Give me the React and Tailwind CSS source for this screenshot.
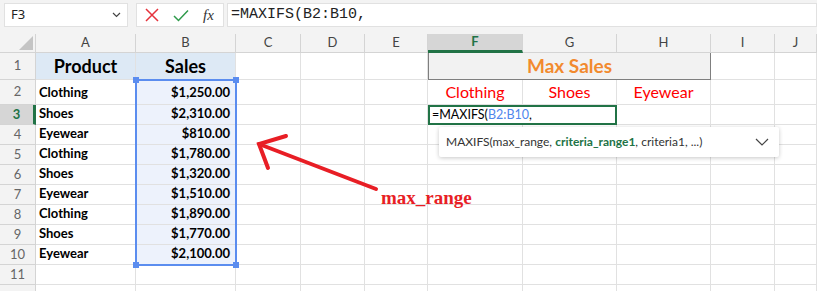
import React from 'react';

const cols = ['A', 'B', 'C', 'D', 'E', 'F', 'G', 'H', 'I', 'J'];

const rows = [
  ['Clothing', '$1,250.00'],
  ['Shoes', '$2,310.00'],
  ['Eyewear', '$810.00'],
  ['Clothing', '$1,780.00'],
  ['Shoes', '$1,320.00'],
  ['Eyewear', '$1,510.00'],
  ['Clothing', '$1,890.00'],
  ['Shoes', '$1,770.00'],
  ['Eyewear', '$2,100.00'],
];

const cell = 'border-r border-b border-[#e1e1e1] bg-white';
const rowHead = 'flex items-center justify-center border-r border-b border-[#d4d4d4] bg-[#f3f3f3] text-[13px] text-[#666]';
const ui = { fontFamily: '"Noto Sans", "Open Sans", sans-serif' };

const Blank = ({ n }) =>
  Array.from({ length: n }).map((_, i) => <div key={i} className={cell} />);

export default function App() {
  return (
    <div className="relative w-[817px] h-[291px] overflow-hidden bg-[#f3f3f3]" style={{ fontFamily: 'Lato, "Liberation Sans", sans-serif' }}>
      {/* formula bar */}
      <div className="flex h-[34px] pt-[3px] pl-[4px]" style={ui}>
        <div className="flex items-center justify-between w-[124px] h-[24px] bg-white border border-[#e1e1e1] px-[6px] text-[13px] text-[#222]">
          <span>F3</span>
          <svg width="9" height="6" viewBox="0 0 9 6"><path d="M1 1l3.5 3.5L8 1" fill="none" stroke="#444" strokeWidth="1.2" /></svg>
        </div>
        <div className="flex items-center ml-[8px] w-[88px] h-[24px] bg-white border border-[#e1e1e1]">
          <svg className="ml-[8px]" width="14" height="14" viewBox="0 0 14 14"><path d="M1 1l12 12M13 1L1 13" stroke="#e5323c" strokeWidth="1.5" /></svg>
          <svg className="ml-[14px]" width="16" height="13" viewBox="0 0 16 13"><path d="M1 7l4.5 4.5L15 1.5" fill="none" stroke="#2f9a4b" strokeWidth="1.5" /></svg>
          <span className="ml-[14px] text-[15px] italic text-[#333]" style={{ fontFamily: '"Liberation Serif", serif' }}>fx</span>
        </div>
        <div className="flex items-center flex-1 ml-[3px] h-[24px] bg-white border border-[#e1e1e1] pl-[3px] text-[15px] text-[#222]" style={{ fontFamily: '"Liberation Mono", monospace' }}>
          =MAXIFS(B2:B10,
        </div>
      </div>

      {/* sheet grid */}
      <div className="grid grid-cols-[36px_100px_100px_65px_64px_63px_95px_94px_94px_64px_42px] grid-rows-[19px_27px_25px_repeat(10,20px)]">
        <div className="relative border-r border-b border-[#d4d4d4] bg-[#f3f3f3]">
          <div className="absolute right-[2px] bottom-[2px] w-0 h-0 border-l-[14px] border-t-[14px] border-l-transparent border-t-transparent border-r-0 border-b-[14px] border-b-[#c4c4c4] border-solid" style={{ borderRightWidth: 0 }} />
        </div>
        {cols.map((c) =>
          c === 'F' ? (
            <div key={c} className="flex items-center justify-center bg-[#d6d6d6] border-r border-[#d4d4d4] border-b-[3px] border-b-[#217346] text-[13px] font-bold text-[#217346]">{c}</div>
          ) : (
            <div key={c} className="flex items-center justify-center bg-[#f3f3f3] border-r border-b border-[#d4d4d4] text-[13px] text-[#444]">{c}</div>
          )
        )}

        {/* row 1 */}
        <div className={rowHead}>1</div>
        <div className="flex items-center justify-center border-r border-b border-[#e1e1e1] bg-[#dde9f5] text-[18px] font-bold text-black">Product</div>
        <div className="flex items-center justify-center border-r border-b border-[#e1e1e1] bg-[#dde9f5] text-[18px] font-bold text-black">Sales</div>
        <Blank n={3} />
        <div className="col-span-3 flex items-center justify-center bg-[#f2f2f2] border border-t-0 border-[#7f7f7f] text-[19px] font-bold text-[#f28a2e]">Max Sales</div>
        <Blank n={2} />

        {/* row 2 */}
        <div className={rowHead}>2</div>
        <div className={`${cell} flex items-end pl-[3px] pb-[2px] text-[13px] font-bold text-black`}>{rows[0][0]}</div>
        <div className="flex items-end justify-end pr-[5px] pb-[2px] border-r border-b border-[#e1e1e1] bg-[#edf2fc] text-[13px] font-bold text-black">{rows[0][1]}</div>
        <Blank n={3} />
        <div className={`${cell} flex items-end justify-center text-[16px] text-[#ff0000]`}>Clothing</div>
        <div className={`${cell} flex items-end justify-center text-[16px] text-[#ff0000]`}>Shoes</div>
        <div className={`${cell} flex items-end justify-center text-[16px] text-[#ff0000]`}>Eyewear</div>
        <Blank n={2} />

        {/* rows 3..10 */}
        {rows.slice(1).map(([p, s], i) => {
          const n = i + 3;
          return (
            <React.Fragment key={n}>
              {n === 3 ? (
                <div className="flex items-center justify-center bg-[#d6d6d6] border-r-[3px] border-r-[#217346] border-b border-[#d4d4d4] text-[13px] font-bold text-[#217346]">3</div>
              ) : (
                <div className={rowHead}>{n}</div>
              )}
              <div className={`${cell} flex items-end pl-[3px] pb-[1px] text-[13px] font-bold text-black`}>{p}</div>
              <div className="flex items-end justify-end pr-[5px] pb-[1px] border-r border-b border-[#e1e1e1] bg-[#edf2fc] text-[13px] font-bold text-black">{s}</div>
              <Blank n={3} />
              {n === 3 ? (
                <>
                  <div className="col-span-2 flex items-center pl-[2px] border-2 border-[#217346] bg-white text-[12.5px] text-black">
                    =MAXIFS(<span className="text-[#4f86ec]">B2:B10</span>,
                  </div>
                  <Blank n={3} />
                </>
              ) : (
                <Blank n={5} />
              )}
            </React.Fragment>
          );
        })}

        {/* rows 11, 12 */}
        <div className={rowHead}>11</div>
        <Blank n={10} />
        <div className={rowHead} />
        <Blank n={10} />
      </div>

      {/* B2:B10 range reference */}
      <div className="pointer-events-none absolute left-[135px] top-[79px] w-[102px] h-[187px] border-2 border-[#5b8def]">
        <div className="absolute -left-[4px] -top-[4px] w-[6px] h-[6px] bg-[#5b8def]" />
        <div className="absolute -right-[4px] -top-[4px] w-[6px] h-[6px] bg-[#5b8def]" />
        <div className="absolute -left-[4px] -bottom-[4px] w-[6px] h-[6px] bg-[#5b8def]" />
        <div className="absolute -right-[4px] -bottom-[4px] w-[6px] h-[6px] bg-[#5b8def]" />
      </div>

      {/* function tooltip */}
      <div className="absolute left-[439px] top-[127px] flex items-center justify-between w-[340px] h-[30px] bg-white pl-[7px] pr-[10px] rounded-[2px] shadow-[0_1px_4px_rgba(0,0,0,0.22)] text-[12px] text-[#333]" style={{ fontFamily: 'Lato, sans-serif' }}>
        <span>
          MAXIFS(max_range, <span className="font-bold text-[#217346]">criteria_range1</span>, criteria1, ...)
        </span>
        <svg width="14" height="8" viewBox="0 0 14 8"><path d="M1 1l6 6 6-6" fill="none" stroke="#444" strokeWidth="1.2" /></svg>
      </div>

      {/* annotation arrow */}
      <svg className="pointer-events-none absolute left-0 top-0" width="817" height="291" viewBox="0 0 817 291">
        <g stroke="#e81e25" strokeWidth="4" strokeLinecap="round" fill="none">
          <path d="M376 189L259 144" />
          <path d="M286 136L259 144L268 168" />
        </g>
      </svg>
      <div className="absolute left-[381px] top-[188px] text-[19px] leading-none font-bold text-[#e81e25]" style={{ fontFamily: '"Liberation Serif", serif' }}>
        max_range
      </div>
    </div>
  );
}
